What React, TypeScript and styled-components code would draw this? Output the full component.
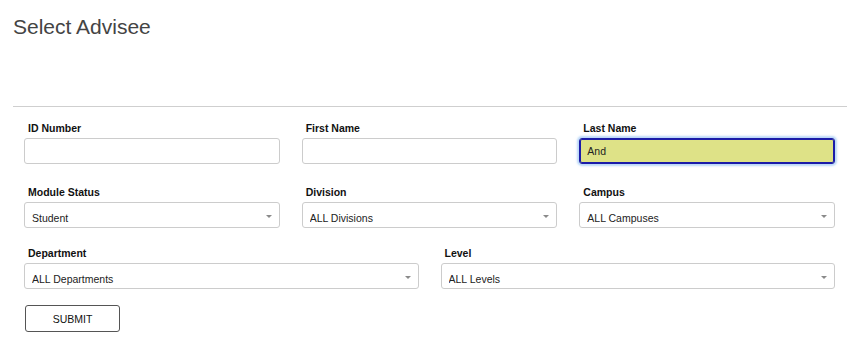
import React from "react";
import styled, { createGlobalStyle } from "styled-components";

const Global = createGlobalStyle`
  html, body { margin: 0; padding: 0; background: #fff; }
  body { font-family: "Liberation Sans", Arial, sans-serif; }
  * { box-sizing: border-box; }
`;

const Page = styled.div`
  padding: 15px 9px 0 13px;
`;

const Title = styled.h1`
  margin: 0;
  font-size: 21px;
  line-height: 24px;
  font-weight: normal;
  color: #444;
`;

const Divider = styled.hr`
  margin: 67px 0 0 0;
  border: 0;
  border-top: 1px solid #cfcfcf;
  height: 0;
`;

const Form = styled.form`
  margin: 14px 12px 0 11px;
  display: flex;
  flex-direction: column;
`;

const Row = styled.div<{ $cols: number; $mb: number }>`
  display: grid;
  grid-template-columns: repeat(${(p) => p.$cols}, 1fr);
  column-gap: 22px;
  margin-bottom: ${(p) => p.$mb}px;
`;

const Field = styled.div`
  display: flex;
  flex-direction: column;
`;

const Label = styled.label`
  display: block;
  font-size: 10.5px;
  line-height: 15px;
  font-weight: bold;
  color: #111;
  padding-left: 4px;
  margin-bottom: 2px;
`;

const TextInput = styled.input<{ $active?: boolean }>`
  width: 100%;
  height: 26px;
  padding: 0 7px;
  font-family: inherit;
  font-size: 10.5px;
  color: #222;
  border-radius: 3px;
  outline: none;
  border: 1px solid ${(p) => (p.$active ? "#1c1ca8" : "#cccccc")};
  background: ${(p) => (p.$active ? "#dee287" : "#fff")};
  box-shadow: ${(p) =>
    p.$active ? "inset 0 0 0 1px #1c1ca8, 0 0 2px 2px rgba(150, 195, 245, 0.65)" : "none"};
`;

const SelectWrap = styled.div`
  position: relative;
`;

const Select = styled.select`
  width: 100%;
  height: 26px;
  padding: 5px 20px 0 7px;
  font-family: inherit;
  font-size: 10.5px;
  color: #222;
  background: #fff;
  border: 1px solid #cccccc;
  border-radius: 3px;
  appearance: none;
  -webkit-appearance: none;
  outline: none;
`;

const Caret = styled.svg`
  position: absolute;
  right: 8px;
  top: 13px;
  width: 6px;
  height: 3px;
  pointer-events: none;
`;

const SubmitButton = styled.button`
  width: 95px;
  height: 27px;
  margin-left: 1px;
  background: #fff;
  border: 1px solid #555;
  border-radius: 3px;
  font-family: inherit;
  font-size: 10.5px;
  color: #111;
  padding: 0;
`;

function Dropdown({ value }: { value: string }) {
  return (
    <SelectWrap>
      <Select defaultValue={value}>
        <option value={value}>{value}</option>
      </Select>
      <Caret viewBox="0 0 6 3">
        <path d="M0 0 L6 0 L3 3 Z" fill="#8a8a8a" />
      </Caret>
    </SelectWrap>
  );
}

export default function App() {
  return (
    <Page>
      <Global />
      <Title>Select Advisee</Title>
      <Divider />
      <Form onSubmit={(e) => e.preventDefault()}>
        <Row $cols={3} $mb={21}>
          <Field>
            <Label>ID Number</Label>
            <TextInput />
          </Field>
          <Field>
            <Label>First Name</Label>
            <TextInput />
          </Field>
          <Field>
            <Label>Last Name</Label>
            <TextInput $active defaultValue="And" />
          </Field>
        </Row>
        <Row $cols={3} $mb={18}>
          <Field>
            <Label>Module Status</Label>
            <Dropdown value="Student" />
          </Field>
          <Field>
            <Label>Division</Label>
            <Dropdown value="ALL Divisions" />
          </Field>
          <Field>
            <Label>Campus</Label>
            <Dropdown value="ALL Campuses" />
          </Field>
        </Row>
        <Row $cols={2} $mb={16}>
          <Field>
            <Label>Department</Label>
            <Dropdown value="ALL Departments" />
          </Field>
          <Field>
            <Label>Level</Label>
            <Dropdown value="ALL Levels" />
          </Field>
        </Row>
        <div>
          <SubmitButton type="submit">SUBMIT</SubmitButton>
        </div>
      </Form>
    </Page>
  );
}
